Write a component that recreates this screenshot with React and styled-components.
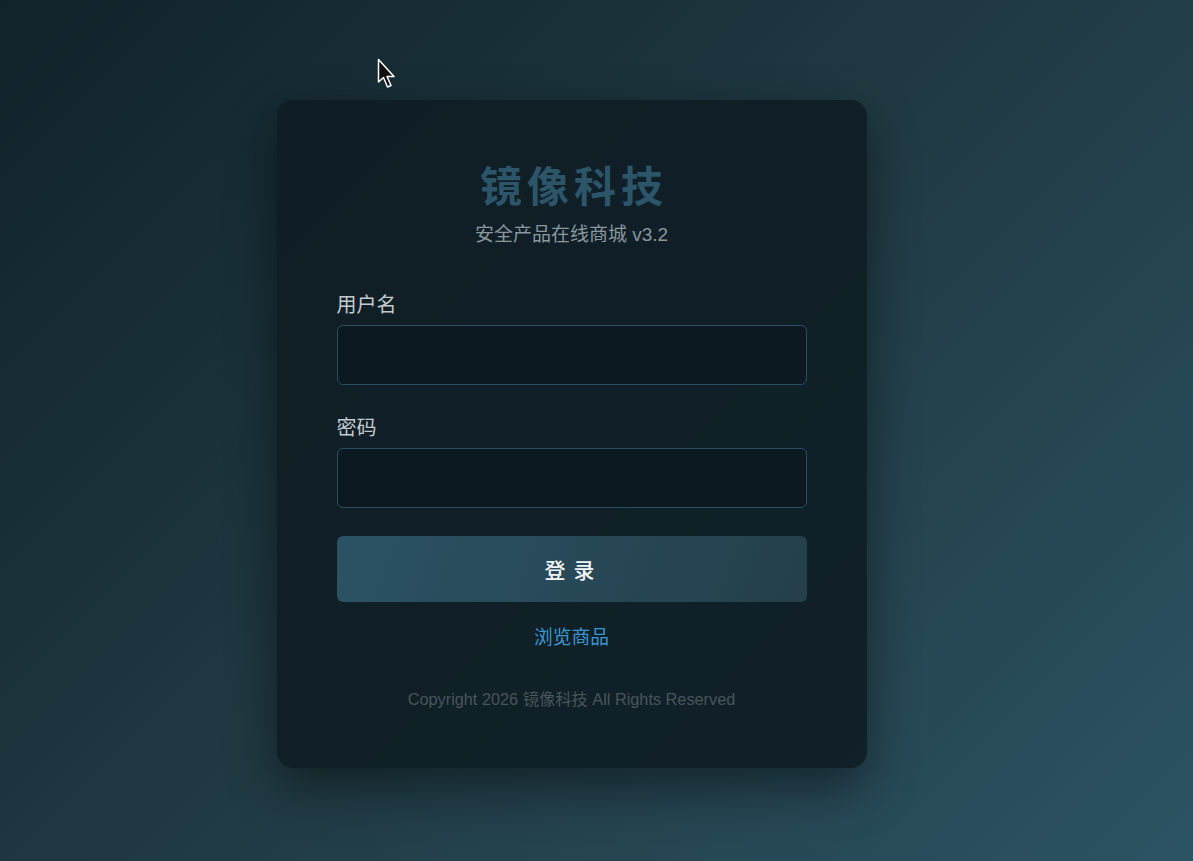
import React from "react";
import styled, { createGlobalStyle } from "styled-components";

const GlobalStyle = createGlobalStyle`
  html, body, #root {
    margin: 0;
    height: 100%;
  }
  body {
    font-family: "Liberation Sans", "Noto Sans CJK SC", sans-serif;
    background: linear-gradient(135deg, #10222a, #203a43, #2c5364);
    overflow: hidden;
  }
`;

const Page = styled.div`
  position: relative;
  height: 100%;
  display: flex;
  justify-content: center;
  align-items: center;
  padding: 7px 50px 0 0;
  box-sizing: border-box;
`;

const Card = styled.div`
  width: 470px;
  padding: 60px 60px 58px;
  background: rgba(15, 29, 37, 0.92);
  border-radius: 16px;
  box-shadow: 0 20px 50px rgba(0, 0, 0, 0.45);
  display: flex;
  flex-direction: column;
`;

const Brand = styled.div`
  text-align: center;
  margin-bottom: 46px;
`;

const Title = styled.h1`
  margin: 0;
  font-size: 42px;
  line-height: 56px;
  font-weight: 700;
  letter-spacing: 5px;
  padding-left: 5px;
  color: #2c5569;
`;

const Subtitle = styled.p`
  margin: 7px 0 0;
  font-size: 19px;
  line-height: 24px;
  color: #8a979e;
`;

const Field = styled.div`
  display: flex;
  flex-direction: column;
  gap: 8px;
  margin-bottom: ${(p) => p.$gap}px;
`;

const Label = styled.label`
  font-size: 20px;
  line-height: 24px;
  color: #c3c9cc;
`;

const Input = styled.input`
  height: 60px;
  box-sizing: border-box;
  border: 1px solid #2a4e62;
  border-radius: 6px;
  background: #0c1920;
  color: #d7dde0;
  font-size: 18px;
  padding: 0 14px;
  outline: none;
`;

const Button = styled.button`
  height: 66px;
  border: none;
  border-radius: 6px;
  background: linear-gradient(110deg, #2b5264, #243f4b);
  color: #f2f4f5;
  font-family: inherit;
  font-size: 21px;
  font-weight: 500;
  letter-spacing: 8px;
  padding-left: 10px;
  cursor: pointer;
`;

const Link = styled.a`
  align-self: center;
  margin-top: 24px;
  font-size: 18.75px;
  line-height: 24px;
  color: #3a97cf;
  text-decoration: none;
`;

const Footer = styled.p`
  margin: 38px 0 0;
  text-align: center;
  font-size: 16.3px;
  line-height: 22px;
  color: #485559;
`;

const Pointer = styled.svg`
  position: absolute;
  left: 377px;
  top: 58px;
`;

export default function App() {
  return (
    <>
      <GlobalStyle />
      <Page>
        <Card>
          <Brand>
            <Title>镜像科技</Title>
            <Subtitle>安全产品在线商城 v3.2</Subtitle>
          </Brand>
          <Field $gap={31}>
            <Label>用户名</Label>
            <Input type="text" />
          </Field>
          <Field $gap={28}>
            <Label>密码</Label>
            <Input type="password" />
          </Field>
          <Button>登录</Button>
          <Link href="#">浏览商品</Link>
          <Footer>Copyright 2026 镜像科技 All Rights Reserved</Footer>
        </Card>
        <Pointer width="22" height="34" viewBox="0 0 22 34">
          <path
            d="M1.5 1.5 L1.5 24 L6.5 19.5 L10.5 29 L14 27.5 L10 18.5 L17 18.5 Z"
            fill="#111"
            stroke="#fff"
            strokeWidth="1.5"
            strokeLinejoin="round"
          />
        </Pointer>
      </Page>
    </>
  );
}
